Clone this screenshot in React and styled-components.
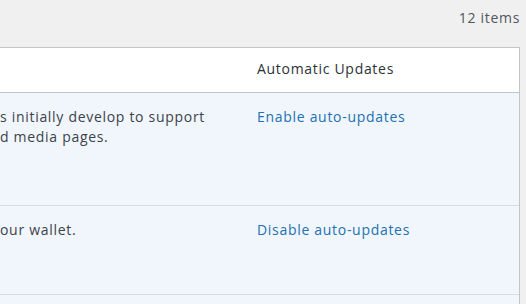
import React from "react";
import styled, { createGlobalStyle } from "styled-components";

const Global = createGlobalStyle`
  html, body { margin: 0; padding: 0; }
  body {
    background: #f0f0f1;
    font-family: "Open Sans", "Noto Sans", sans-serif;
    font-size: 14px;
    font-weight: 500;
    letter-spacing: 0.7px;
    color: #3c434a;
  }
`;

const Page = styled.div`
  width: 526px;
  height: 304px;
  overflow: hidden;
`;

const TopBar = styled.div`
  height: 47px;
  display: flex;
  justify-content: flex-end;
  align-items: flex-start;
  padding: 8px 6px 0 0;
  box-sizing: border-box;
  color: #50575e;
  line-height: 20px;
`;

const Table = styled.div`
  margin-right: 6px;
  border: 1px solid #c3c4c7;
  border-left: none;
  background: #fff;
`;

const Row = styled.div`
  display: grid;
  grid-template-columns: 247px 1fr;
  height: ${(p) => p.$h}px;
  background: ${(p) => (p.$head ? "#fff" : "#f0f6fc")};
  border-bottom: 1px solid ${(p) => (p.$head ? "#c3c4c7" : "#dcdcde")};
  box-sizing: content-box;
`;

const Cell = styled.div`
  padding: ${(p) => (p.$head ? "11px" : "14px")} 10px 0 ${(p) => (p.$first ? "0" : "10px")};
  line-height: 20px;
  color: ${(p) => (p.$head ? "#2c3338" : "#3c434a")};
`;

const Link = styled.a`
  color: #2271b1;
  text-decoration: none;
`;

export default function App() {
  return (
    <Page>
      <Global />
      <TopBar>12 items</TopBar>
      <Table>
        <Row $head $h={44}>
          <Cell $head $first></Cell>
          <Cell $head>Automatic Updates</Cell>
        </Row>
        <Row $h={112}>
          <Cell $first>
            s initially develop to support
            <br />
            d media pages.
          </Cell>
          <Cell>
            <Link href="#">Enable auto-updates</Link>
          </Cell>
        </Row>
        <Row $h={88}>
          <Cell $first>our wallet.</Cell>
          <Cell>
            <Link href="#">Disable auto-updates</Link>
          </Cell>
        </Row>
        <Row $h={40}>
          <Cell $first></Cell>
          <Cell></Cell>
        </Row>
      </Table>
    </Page>
  );
}
